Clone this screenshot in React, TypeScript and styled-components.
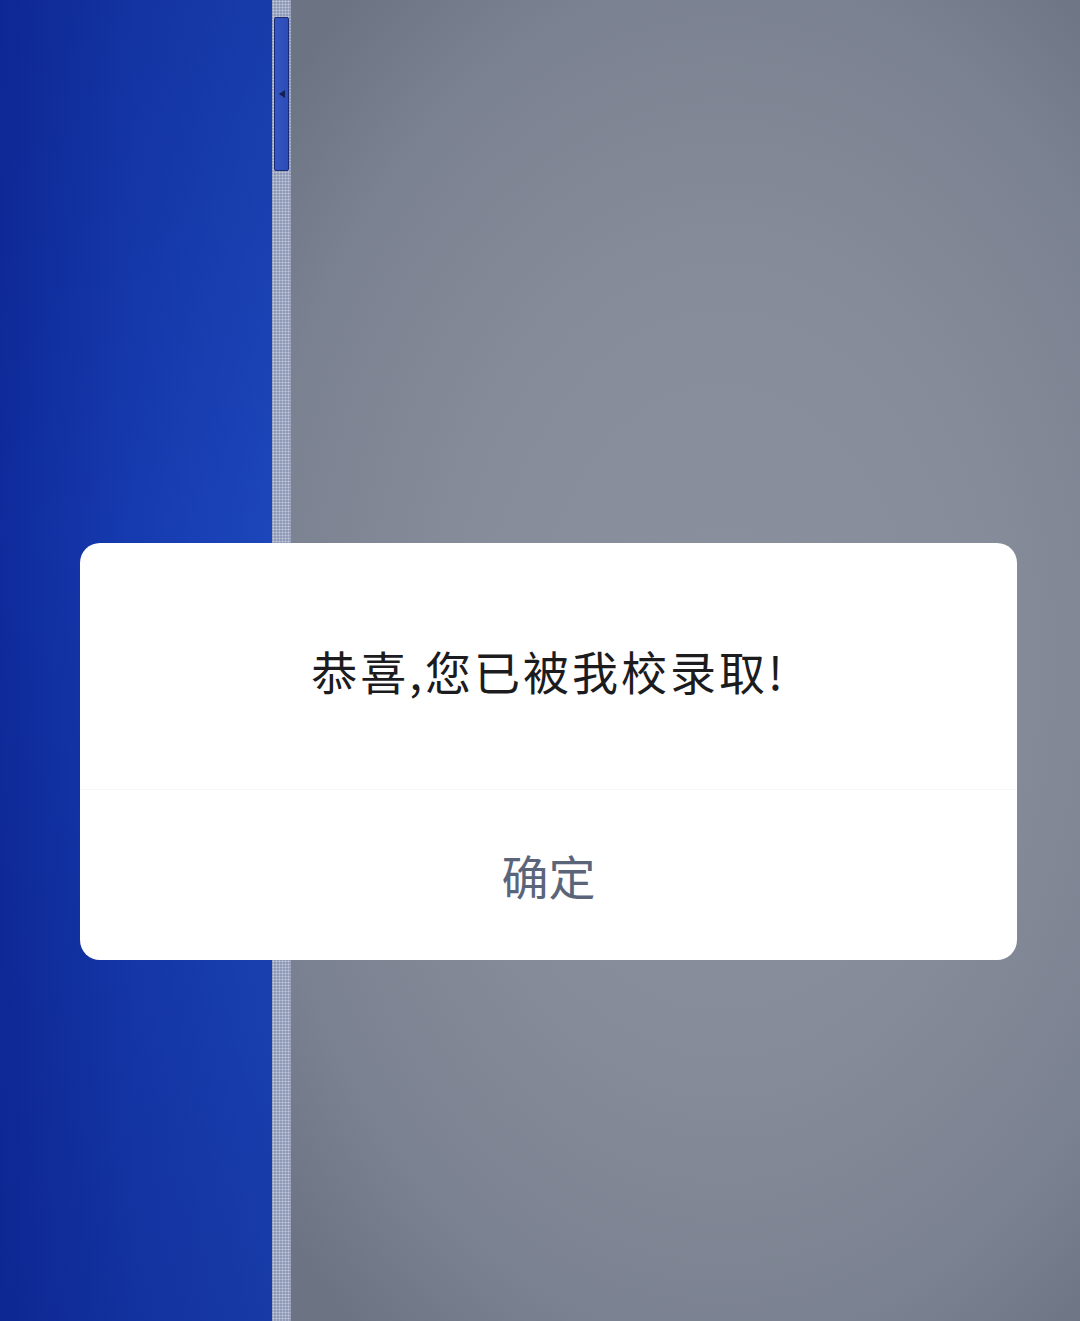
import React from "react";
import styled, { createGlobalStyle } from "styled-components";

const Global = createGlobalStyle`
  html, body { margin: 0; padding: 0; }
  body { font-family: "Noto Sans CJK SC", "Noto Sans", sans-serif; }
`;

const Screen = styled.div`
  position: relative;
  width: 1080px;
  height: 1321px;
  display: flex;
  overflow: hidden;
`;

const BluePanel = styled.div`
  width: 272px;
  flex: none;
  background:
    linear-gradient(180deg, rgba(10, 30, 120, 0.25) 0%, rgba(255, 255, 255, 0) 40%, rgba(10, 30, 120, 0.3) 100%),
    linear-gradient(90deg, #0f2b9c 0%, #163bb0 50%, #1c46ba 100%);
`;

const Strip = styled.div`
  width: 19px;
  flex: none;
  position: relative;
  background-color: #8f9ab8;
  background-image: radial-gradient(circle, rgba(255, 255, 255, 0.45) 0.8px, transparent 1.2px);
  background-size: 3px 3px;
`;

const Handle = styled.div`
  position: absolute;
  left: 2px;
  top: 17px;
  width: 13px;
  height: 152px;
  background: linear-gradient(90deg, #3556c2, #2c4cb8);
  border: 1px solid #1a2a70;
  border-radius: 2px;
  display: flex;
  align-items: center;
  justify-content: center;
`;

const Arrow = styled.div`
  width: 0;
  height: 0;
  border-top: 4px solid transparent;
  border-bottom: 4px solid transparent;
  border-right: 6px solid #14204f;
`;

const GrayArea = styled.div`
  flex: 1;
  background:
    radial-gradient(ellipse 75% 65% at 55% 50%, #8b909d 0%, #868c9a 45%, #7a8190 80%, #6c7383 100%);
`;

const Dialog = styled.div`
  position: absolute;
  left: 80px;
  top: 543px;
  width: 937px;
  height: 417px;
  background: #ffffff;
  border-radius: 20px;
  display: flex;
  flex-direction: column;
  overflow: hidden;
`;

const Message = styled.div`
  height: 247px;
  display: flex;
  align-items: center;
  justify-content: center;
  padding-top: 8px;
  box-sizing: border-box;
  font-size: 46px;
  letter-spacing: 3px;
  color: #1c1c1e;
  border-bottom: 1px solid #f7f7f8;
`;

const Confirm = styled.button`
  flex: 1;
  border: none;
  background: transparent;
  font-family: "Noto Sans CJK SC", "Noto Sans", sans-serif;
  font-size: 47px;
  color: #5b6579;
  padding: 0 0 2px;
  display: flex;
  align-items: center;
  justify-content: center;
`;

export default function App() {
  return (
    <>
      <Global />
      <Screen>
        <BluePanel />
        <Strip>
          <Handle>
            <Arrow />
          </Handle>
        </Strip>
        <GrayArea />
        <Dialog>
          <Message>恭喜,您已被我校录取!</Message>
          <Confirm>确定</Confirm>
        </Dialog>
      </Screen>
    </>
  );
}
